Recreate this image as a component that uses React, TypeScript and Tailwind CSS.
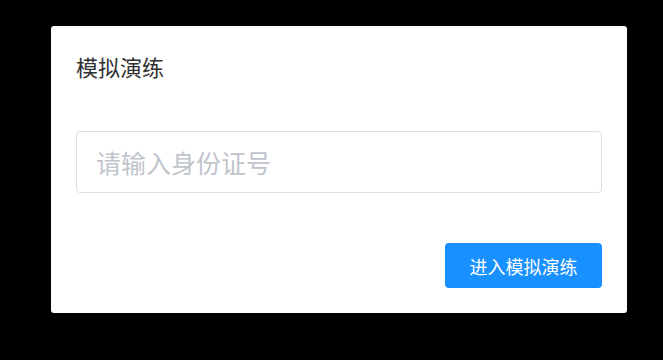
import React, { useState } from 'react';

export default function App() {
  const [idCard, setIdCard] = useState('');

  return (
    <div
      className="w-full h-[360px] bg-black flex items-start pl-[51px] pt-[26px]"
      style={{ fontFamily: '"Noto Sans CJK SC", "Noto Sans", sans-serif' }}
    >
      {/* Dialog */}
      <div className="w-[576px] h-[287px] bg-white rounded-[3px] px-[25px] pt-[25px] flex flex-col">
        <h2 className="h-[30px] leading-[30px] text-[22px] text-[#303133] font-normal">模拟演练</h2>

        <input
          value={idCard}
          onChange={(e) => setIdCard(e.target.value)}
          placeholder="请输入身份证号"
          className="mt-[50px] h-[62px] w-full border border-[#dcdfe6] rounded-[4px] px-[19px] text-[25px] text-[#606266] placeholder:text-[#c0c4cc] outline-none"
        />

        <div className="mt-[50px] flex justify-end">
          <button className="w-[157px] h-[45px] bg-[#1890ff] rounded-[4px] text-white text-[18px] leading-none">
            进入模拟演练
          </button>
        </div>
      </div>
    </div>
  );
}
